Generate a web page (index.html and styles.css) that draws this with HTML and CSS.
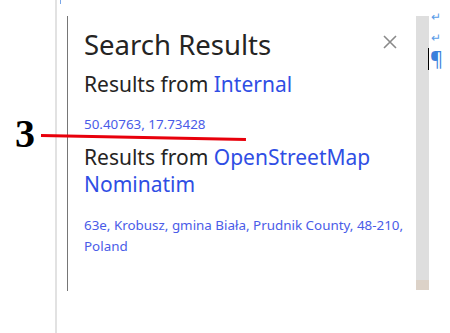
FILE: index.html
```html
<!DOCTYPE html>
<html lang="en">
<head>
  <meta charset="UTF-8" />
  <title>Search Results</title>
  <link rel="stylesheet" href="styles.css">
</head>
<body>
<div class="gutter"></div>
<div class="page-edge"></div>

<div class="doc">
  <div class="top-mark"></div>

  <div class="search-panel">
    <div class="panel-header">
      <h1 class="title">Search Results</h1>
      <button class="close-button" aria-label="Close">
        <svg width="14" height="14" viewBox="0 0 14 14">
          <path d="M1 1 L13 13 M13 1 L1 13" stroke="#8a8a8a" stroke-width="1.6" fill="none"/>
        </svg>
      </button>
    </div>

    <div class="source">Results from <a href="#">Internal</a></div>
    <a href="#" class="result first">50.40763, 17.73428</a>

    <div class="source">Results from <a href="#">OpenStreetMap Nominatim</a></div>
    <a href="#" class="result">63e, Krobusz, gmina Biała, Prudnik County, 48&#8209;210, Poland</a>
  </div>

  <div class="side-strip">
    <div class="strip-bottom"></div>
  </div>

  <div class="marks">
    <span class="return">↵</span>
    <span class="return">↵</span>
    <span class="pilcrow">¶</span>
  </div>
</div>

<!-- annotation over the page -->
<div class="callout">
  <span class="callout-num">3</span>
  <div class="callout-line"></div>
</div>
</body>
</html>
```

FILE: styles.css
```css
body {
  font-family: "Noto Sans", "Open Sans", sans-serif;
  margin: 0;
  background: #ffffff;
  display: flex;
  height: 333px;
  overflow: hidden;
}

.gutter {
  width: 55px;
  flex-shrink: 0;
}

.page-edge {
  width: 2px;
  background: #e2e2e2;
  flex-shrink: 0;
}

.doc {
  flex: 1;
  display: flex;
  position: relative;
  padding: 16px 0 0 10px;
}

.top-mark {
  position: absolute;
  left: 3px;
  top: 0;
  width: 1px;
  height: 4px;
  background: #7aa7e8;
}

.search-panel {
  width: 349px;
  height: 275px;
  flex-shrink: 0;
  border-left: 1px solid #767676;
  padding: 0 10px 0 16px;
  box-sizing: border-box;
  display: flex;
  flex-direction: column;
}

.panel-header {
  display: flex;
  justify-content: space-between;
  align-items: flex-start;
  padding-right: 9px;
}

.title {
  font-size: 27.5px;
  font-weight: 400;
  color: #252423;
  margin: 11px 0 0;
  line-height: 36px;
}

.close-button {
  background: none;
  border: none;
  padding: 0;
  margin-top: 19px;
  cursor: pointer;
  display: flex;
}

.source {
  font-size: 21px;
  color: #252423;
  line-height: 27px;
  margin-top: 8px;
}

.source a {
  color: #2f4ee4;
  text-decoration: none;
}

.result {
  font-size: 13.4px;
  line-height: 21px;
  color: #4a5ce8;
  text-decoration: none;
  margin-top: 17px;
}

.result.first {
  margin-top: 16px;
  margin-bottom: 1px;
}

.side-strip {
  width: 13px;
  height: 274px;
  flex-shrink: 0;
  background: #dedede;
  display: flex;
  flex-direction: column;
  justify-content: flex-end;
}

.strip-bottom {
  height: 10px;
  background: #dcd2c8;
}

.marks {
  display: flex;
  flex-direction: column;
  margin: -10px 0 0 2px;
  color: #5a9ce8;
  font-size: 12px;
  line-height: 21px;
}

.pilcrow {
  font-size: 20px;
  line-height: 22px;
  color: #3b7fdc;
  border-left: 1px solid #000;
  margin-left: -3px;
  padding-left: 1px;
}

.callout {
  position: absolute;
  left: 15px;
  top: 112px;
  display: flex;
  align-items: center;
}

.callout-num {
  font-family: "Liberation Serif", serif;
  font-weight: 700;
  font-size: 40px;
  color: #000;
  line-height: 44px;
}

.callout-line {
  width: 205px;
  height: 3px;
  background: #e8000b;
  margin: 2px 0 0 6px;
  transform: rotate(1.1deg);
  transform-origin: left center;
}
```
